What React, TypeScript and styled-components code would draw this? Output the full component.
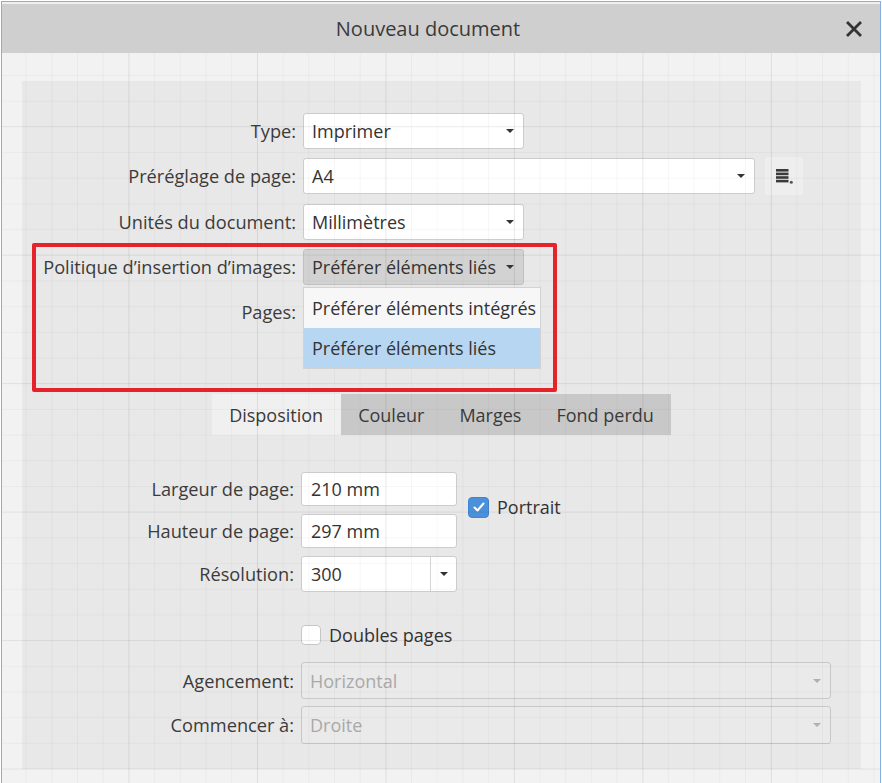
import React from "react";
import styled, { createGlobalStyle } from "styled-components";

const GlobalStyle = createGlobalStyle`
  html, body { margin: 0; padding: 0; background: #ffffff; }
  body { font-family: "Open Sans", "Noto Sans", Arial, sans-serif; color: #333333; }
  * { box-sizing: border-box; }
`;

const Window = styled.div`
  width: 880px;
  height: 782px;
  margin: 1px 0 0 1px;
  border: 1px solid #86aee2;
  border-bottom: none;
  background: #f2eeee;
  padding-top: 2px;
  display: flex;
  flex-direction: column;
  overflow: hidden;
`;

const TitleBar = styled.div`
  height: 49px;
  flex: none;
  background: #d0cfcf;
  display: grid;
  grid-template-columns: 1fr auto 1fr;
  align-items: center;
`;

const Title = styled.div`
  grid-column: 2;
  margin-right: 26px;
  font-size: 20px;
  color: #3a3a3a;
`;

const CloseButton = styled.div`
  grid-column: 3;
  justify-self: end;
  margin-right: 18px;
  width: 16px;
  height: 16px;
  display: flex;
  align-items: center;
  justify-content: center;
`;

const Body = styled.div`
  flex: 1;
  position: relative;
  background: #f3f2f2;
  padding: 28px 19px 0 20px;
  &::after {
    content: "";
    position: absolute;
    inset: 0;
    pointer-events: none;
    background-image:
      linear-gradient(to right, rgba(0, 0, 0, 0.055) 1px, transparent 1px),
      linear-gradient(to bottom, rgba(0, 0, 0, 0.045) 1px, transparent 1px),
      linear-gradient(to right, rgba(0, 0, 0, 0.032) 1px, transparent 1px),
      linear-gradient(to bottom, rgba(0, 0, 0, 0.032) 1px, transparent 1px);
    background-size: 128.5px 128.5px, 128.5px 128.5px, 25.7px 25.7px, 25.7px 25.7px;
    background-position: -2px 73px, -2px 73px, -2px 22px, -2px 22px;
  }
`;

const Panel = styled.div`
  background: #e9e8e8;
  height: 688px;
  position: relative;
  display: flex;
  flex-direction: column;
`;

const TopForm = styled.div`
  display: grid;
  grid-template-columns: 274px auto;
  column-gap: 7px;
  row-gap: 9.3px;
  grid-auto-rows: 36px;
  padding-top: 32px;
`;

const Label = styled.div`
  font-size: 18.2px;
  color: #3b3b3b;
  text-align: right;
  align-self: center;
  white-space: nowrap;
`;

const FieldCell = styled.div`
  position: relative;
  display: flex;
  align-items: center;
  gap: 10px;
`;

const Select = styled.div<{ $width: number; $pressed?: boolean; $disabled?: boolean; $height?: number }>`
  width: ${(p) => p.$width}px;
  height: ${(p) => p.$height ?? 36}px;
  border-radius: 3px;
  border: 1px solid ${(p) => (p.$pressed ? "#c2c1c1" : p.$disabled ? "#c9c8c8" : "#cdcccc")};
  background: ${(p) => (p.$pressed ? "#d3d2d2" : p.$disabled ? "#eaeaea" : "#ffffff")};
  display: flex;
  align-items: center;
  padding: 0 9px 0 8px;
  font-size: 18px;
  color: ${(p) => (p.$disabled ? "#a9a9a9" : "#333333")};
`;

const Value = styled.span`
  flex: 1;
  white-space: nowrap;
`;

const Arrow = styled.span<{ $light?: boolean }>`
  width: 0;
  height: 0;
  border-left: 4px solid transparent;
  border-right: 4px solid transparent;
  border-top: 4px solid ${(p) => (p.$light ? "#b0b0b0" : "#333333")};
`;

const PresetButton = styled.div`
  width: 38px;
  height: 38px;
  border-radius: 3px;
  background: #efeeee;
  display: flex;
  align-items: center;
  justify-content: center;
`;

const DropList = styled.div`
  position: absolute;
  top: calc(100% + 2px);
  left: 0;
  width: 238px;
  border: 1px solid #d2d2d2;
  background: #f7f7f7;
  z-index: 2;
`;

const DropItem = styled.div<{ $selected?: boolean }>`
  height: 40px;
  display: flex;
  align-items: center;
  padding-left: 8px;
  font-size: 18px;
  color: #333333;
  white-space: nowrap;
  background: ${(p) => (p.$selected ? "#b7d6f2" : "#f7f7f7")};
`;

const RedFrame = styled.div`
  position: absolute;
  left: 10px;
  top: 162px;
  width: 525px;
  height: 149px;
  border: 4px solid #e5232a;
  border-radius: 2px;
  pointer-events: none;
  z-index: 3;
`;

const Tabs = styled.div`
  align-self: center;
  display: flex;
  margin-top: 64px;
  height: 41px;
  background: #c9c8c8;
`;

const Tab = styled.div<{ $active?: boolean }>`
  padding: 0 17.5px;
  display: flex;
  align-items: center;
  font-size: 18px;
  color: #3a3a3a;
  background: ${(p) => (p.$active ? "#f1f0f0" : "transparent")};
`;

const LowerForm = styled.div`
  display: grid;
  grid-template-columns: 272px 156px 1fr;
  column-gap: 7px;
  padding-right: 29px;
  margin-top: 37px;
`;

const Input = styled.div<{ $height?: number }>`
  width: 100%;
  height: ${(p) => p.$height ?? 34}px;
  border-radius: 3px;
  border: 1px solid #cdcccc;
  background: #ffffff;
  display: flex;
  align-items: center;
  font-size: 18px;
  color: #333333;
`;

const InputText = styled.span`
  flex: 1;
  padding-left: 9px;
`;

const SpinSegment = styled.div`
  width: 26px;
  align-self: stretch;
  border-left: 1px solid #d6d6d6;
  display: flex;
  align-items: center;
  justify-content: center;
`;

const Cell = styled.div<{ $col?: string; $row?: string; $mt?: number }>`
  grid-column: ${(p) => p.$col ?? "auto"};
  grid-row: ${(p) => p.$row ?? "auto"};
  margin-top: ${(p) => p.$mt ?? 0}px;
  display: flex;
  align-items: center;
`;

const LabelCell = styled(Label)<{ $mt?: number }>`
  margin-top: ${(p) => p.$mt ?? 0}px;
`;

const CheckLine = styled.label<{ $offsetX?: number; $offsetY?: number }>`
  display: flex;
  align-items: center;
  gap: 8px;
  font-size: 18px;
  color: #333333;
  margin-left: ${(p) => p.$offsetX ?? 0}px;
  margin-top: ${(p) => p.$offsetY ?? 0}px;
`;

const CheckBox = styled.span<{ $checked?: boolean }>`
  width: ${(p) => (p.$checked ? 21 : 20)}px;
  height: ${(p) => (p.$checked ? 21 : 20)}px;
  border-radius: 4px;
  border: 1px solid ${(p) => (p.$checked ? "#3f85d2" : "#c6c6c6")};
  background: ${(p) => (p.$checked ? "#4a90db" : "#ffffff")};
  display: flex;
  align-items: center;
  justify-content: center;
`;

const CloseIcon = () => (
  <svg width="16" height="16" viewBox="0 0 16 16">
    <path d="M2 2 L14 14 M14 2 L2 14" stroke="#333" strokeWidth="2.8" strokeLinecap="square" />
  </svg>
);

const PresetIcon = () => (
  <svg width="20" height="18" viewBox="0 0 20 18">
    <rect x="2" y="2" width="12.5" height="2.6" fill="#3a3a3a" />
    <rect x="2" y="5.6" width="12.5" height="2.6" fill="#3a3a3a" />
    <rect x="2" y="9.2" width="12.5" height="2.6" fill="#3a3a3a" />
    <rect x="2" y="12.8" width="12.5" height="2.6" fill="#3a3a3a" />
    <circle cx="17.3" cy="15.2" r="1.5" fill="#555" />
  </svg>
);

const CheckMark = () => (
  <svg width="14" height="14" viewBox="0 0 14 14">
    <path d="M2.5 7.5 L5.5 10.5 L11.5 3.5" stroke="#fff" strokeWidth="2" fill="none" strokeLinecap="round" strokeLinejoin="round" />
  </svg>
);

export default function App() {
  return (
    <>
      <GlobalStyle />
      <Window>
        <TitleBar>
          <Title>Nouveau document</Title>
          <CloseButton>
            <CloseIcon />
          </CloseButton>
        </TitleBar>
        <Body>
          <Panel>
            <TopForm>
              <Label>Type:</Label>
              <FieldCell>
                <Select $width={221}>
                  <Value>Imprimer</Value>
                  <Arrow />
                </Select>
              </FieldCell>

              <Label>Préréglage de page:</Label>
              <FieldCell>
                <Select $width={452}>
                  <Value>A4</Value>
                  <Arrow />
                </Select>
                <PresetButton>
                  <PresetIcon />
                </PresetButton>
              </FieldCell>

              <Label>Unités du document:</Label>
              <FieldCell>
                <Select $width={221}>
                  <Value>Millimètres</Value>
                  <Arrow />
                </Select>
              </FieldCell>

              <Label>Politique d’insertion d’images:</Label>
              <FieldCell>
                <Select $width={221} $pressed>
                  <Value>Préférer éléments liés</Value>
                  <Arrow />
                </Select>
                <DropList>
                  <DropItem>Préférer éléments intégrés</DropItem>
                  <DropItem $selected>Préférer éléments liés</DropItem>
                </DropList>
              </FieldCell>

              <Label>Pages:</Label>
              <FieldCell>
                <Select $width={221} />
              </FieldCell>
            </TopForm>

            <Tabs>
              <Tab $active>Disposition</Tab>
              <Tab>Couleur</Tab>
              <Tab>Marges</Tab>
              <Tab>Fond perdu</Tab>
            </Tabs>

            <LowerForm>
              <LabelCell>Largeur de page:</LabelCell>
              <Cell $col="2">
                <Input>
                  <InputText>210 mm</InputText>
                </Input>
              </Cell>
              <Cell $col="3" $row="1 / span 2">
                <CheckLine $offsetX={4} $offsetY={-6}>
                  <CheckBox $checked>
                    <CheckMark />
                  </CheckBox>
                  Portrait
                </CheckLine>
              </Cell>

              <LabelCell $mt={8}>Hauteur de page:</LabelCell>
              <Cell $col="2" $mt={8}>
                <Input>
                  <InputText>297 mm</InputText>
                </Input>
              </Cell>

              <LabelCell $mt={8}>Résolution:</LabelCell>
              <Cell $col="2" $mt={8}>
                <Input $height={36}>
                  <InputText>300</InputText>
                  <SpinSegment>
                    <Arrow />
                  </SpinSegment>
                </Input>
              </Cell>
              <Cell $col="3" />

              <Cell $col="2 / span 2" $mt={31}>
                <CheckLine>
                  <CheckBox />
                  Doubles pages
                </CheckLine>
              </Cell>

              <LabelCell $mt={15}>Agencement:</LabelCell>
              <Cell $col="2 / span 2" $mt={15}>
                <Select $width={530} $disabled $height={37}>
                  <Value>Horizontal</Value>
                  <Arrow $light />
                </Select>
              </Cell>

              <LabelCell $mt={7}>Commencer à:</LabelCell>
              <Cell $col="2 / span 2" $mt={7}>
                <Select $width={530} $disabled $height={38}>
                  <Value>Droite</Value>
                  <Arrow $light />
                </Select>
              </Cell>
            </LowerForm>

            <RedFrame />
          </Panel>
        </Body>
      </Window>
    </>
  );
}
